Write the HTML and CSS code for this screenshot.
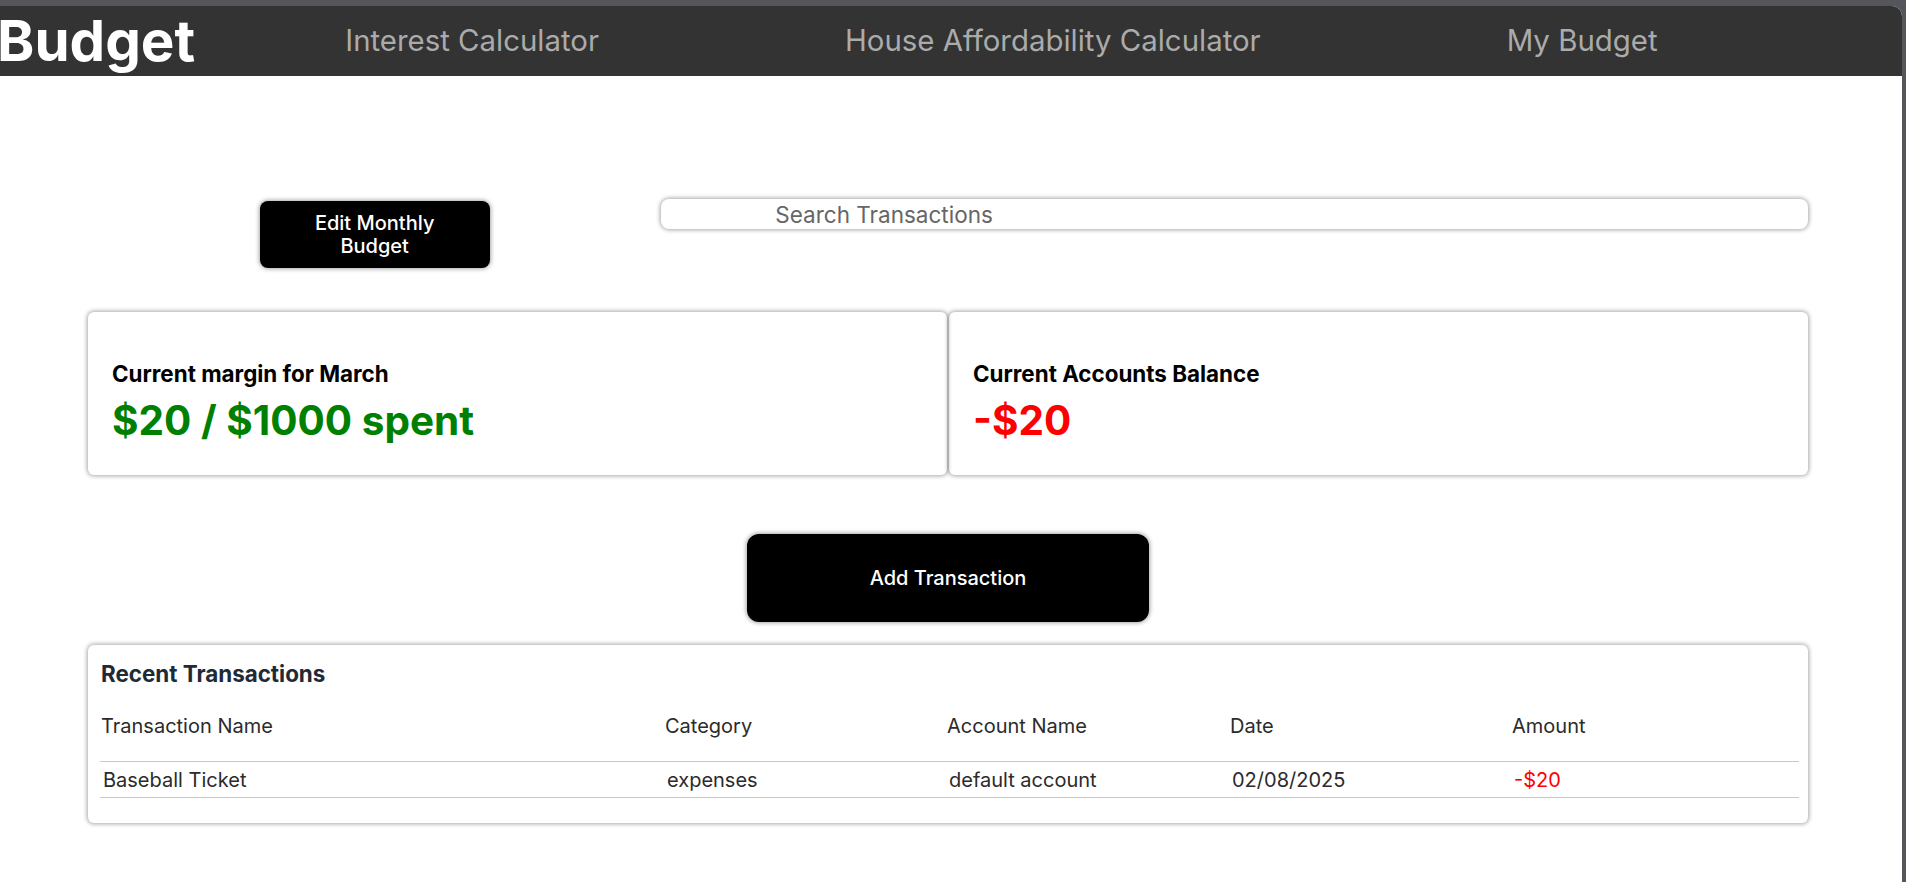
FILE: index.html
```html
<!DOCTYPE html>
<html lang="en">
<head>
<meta charset="utf-8">
<title>Budget</title>
<link rel="stylesheet" href="styles.css">
</head>
<body>
<div class="window">
  <header class="topbar">
    <div class="logo">Budget</div>
    <nav class="nav">
      <a class="nav-link" href="#">Interest Calculator</a>
      <a class="nav-link" href="#">House Affordability Calculator</a>
      <a class="nav-link" href="#">My Budget</a>
    </nav>
  </header>
  <main class="content">
    <section class="toolbar">
      <div class="toolbar-left">
        <button class="btn btn-edit" type="button">Edit Monthly Budget</button>
      </div>
      <input class="search" type="text" placeholder="Search Transactions">
    </section>
    <section class="stats">
      <div class="stat-card">
        <h3 class="stat-label">Current margin for March</h3>
        <p class="stat-value positive">$20 / $1000 spent</p>
      </div>
      <div class="stat-card">
        <h3 class="stat-label">Current Accounts Balance</h3>
        <p class="stat-value negative">-$20</p>
      </div>
    </section>
    <div class="add-row">
      <button class="btn btn-add" type="button">Add Transaction</button>
    </div>
    <section class="tx-card">
      <h2 class="tx-title">Recent Transactions</h2>
      <table class="tx-table">
        <colgroup>
          <col class="col-name"><col class="col-cat"><col class="col-acct"><col class="col-date"><col class="col-amt">
        </colgroup>
        <thead>
          <tr><th>Transaction Name</th><th>Category</th><th>Account Name</th><th>Date</th><th>Amount</th></tr>
        </thead>
        <tbody>
          <tr><td>Baseball Ticket</td><td>expenses</td><td>default account</td><td>02/08/2025</td><td class="amount-neg">-$20</td></tr>
        </tbody>
      </table>
    </section>
  </main>
</div>
</body>
</html>
```
FILE: styles.css
```css
html, body {
  margin: 0;
  padding: 0;
  height: 100%;
  overflow: hidden;
}
body {
  background: #55565b;
  font-family: Inter, "Noto Sans", sans-serif;
}
.window {
  margin-top: 6px;
  margin-right: 4px;
  background: #ffffff;
  border-top-right-radius: 10px;
  overflow: hidden;
  height: calc(100vh - 6px);
}
.topbar {
  height: 70px;
  background: #333333;
  display: flex;
  align-items: center;
}
.logo {
  color: #ffffff;
  font-size: 56.5px;
  font-weight: 700;
  margin-left: -3px;
  line-height: 1.2;
}
.nav {
  display: flex;
  align-items: center;
  gap: 246px;
  margin-left: 150px;
}
.nav-link {
  color: #ababab;
  text-decoration: none;
  font-size: 29.4px;
  line-height: 1.2;
}
.content {
  padding: 0 94px 0 88px;
}
.toolbar {
  display: grid;
  grid-template-columns: 1fr 2fr;
  align-items: start;
  margin-top: 122px;
  height: 70px;
}
.toolbar-left {
  display: flex;
  justify-content: center;
  padding-top: 3px;
}
.btn {
  background: #000000;
  color: #ffffff;
  border: none;
  font-family: Inter, "Noto Sans", sans-serif;
  font-weight: 500;
  font-size: 20px;
  line-height: 23px;
  box-shadow: 0 0 4px 1px rgba(0, 0, 0, 0.35);
  cursor: pointer;
}
.btn-edit {
  width: 230px;
  height: 67px;
  border-radius: 8px;
  padding: 0 36px;
}
.search {
  box-sizing: border-box;
  height: 30px;
  width: 100%;
  margin-top: 1px;
  border: none;
  border-radius: 8px;
  box-shadow: 0 0 4px 1px rgba(0, 0, 0, 0.35);
  padding: 0 0 0 114px;
  font-family: Inter, "Noto Sans", sans-serif;
  font-size: 22.5px;
  color: #333;
  outline: none;
}
.search::placeholder {
  color: #666666;
}
.stats {
  display: grid;
  grid-template-columns: 1fr 1fr;
  gap: 2px;
  margin-top: 44px;
}
.stat-card {
  height: 163px;
  box-sizing: border-box;
  padding: 50px 24px 0;
  border-radius: 6px;
  box-shadow: 0 0 4px 1px rgba(0, 0, 0, 0.35);
}
.stat-label {
  margin: 0;
  font-size: 22.4px;
  font-weight: 700;
  line-height: 24px;
  color: #000;
}
.stat-value {
  margin: 11px 0 0;
  font-size: 40.5px;
  font-weight: 700;
  line-height: 48px;
}
.positive { color: #008000; }
.negative { color: #ff0000; }
.add-row {
  display: flex;
  justify-content: center;
  margin-top: 59px;
}
.btn-add {
  width: 402px;
  height: 88px;
  border-radius: 12px;
}
.tx-card {
  margin-top: 23px;
  box-sizing: border-box;
  height: 178px;
  padding: 17px 9px 0 12px;
  border-radius: 6px;
  box-shadow: 0 0 4px 1px rgba(0, 0, 0, 0.35);
}
.tx-title {
  margin: 0 0 0 1px;
  font-size: 22.4px;
  font-weight: 700;
  line-height: 24px;
  color: #1f2a37;
}
.tx-table {
  width: 100%;
  table-layout: fixed;
  margin-top: 28px;
  border-collapse: collapse;
  font-size: 20px;
  color: #2b2b2b;
}
.col-name { width: 564px; }
.col-cat { width: 282px; }
.col-acct { width: 283px; }
.col-date { width: 282px; }
.col-amt { width: auto; }
.tx-table th {
  text-align: left;
  font-weight: 400;
  line-height: 24px;
  padding: 0 0 23px 1px;
  border-bottom: 1px solid #c8c8c8;
}
.tx-table td {
  line-height: 24px;
  padding: 6px 0 5px 3px;
  border-bottom: 1px solid #c8c8c8;
}
.amount-neg { color: #ff0000; }
```
